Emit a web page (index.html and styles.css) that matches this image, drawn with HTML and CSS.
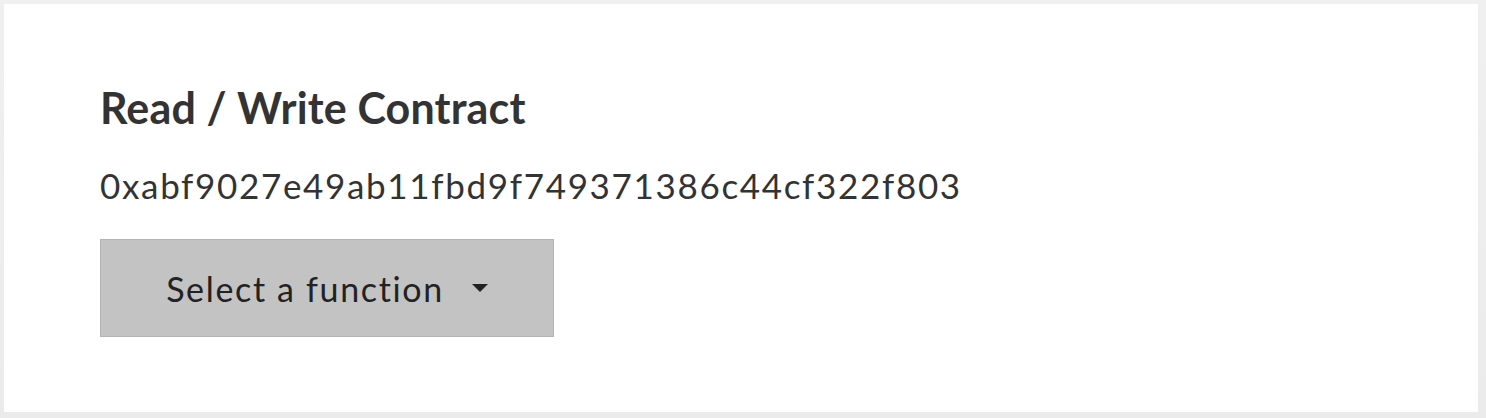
FILE: index.html
```html
<!DOCTYPE html>
<html>
<head>
<meta charset="utf-8">
<link rel="stylesheet" href="styles.css">
</head>
<body>
<div class="page">
  <div class="card">
    <h1 class="title">Read / Write Contract</h1>
    <div class="address">0xabf9027e49ab11fbd9f749371386c44cf322f803</div>
    <button class="select">
      <span class="select-label">Select a function</span>
      <svg class="caret" width="16" height="8" viewBox="0 0 16 8"><path d="M0 0H16L8 8Z" fill="#222"/></svg>
    </button>
  </div>
</div>
</body>
</html>
```
FILE: styles.css
```css
html, body {
  margin: 0;
  padding: 0;
}
body {
  background: #ededed;
  font-family: Lato, "Noto Sans", sans-serif;
}
.page {
  width: 1486px;
  height: 418px;
  box-sizing: border-box;
  padding: 4px 8px 6px 4px;
  background: linear-gradient(#f0f0f0, #ebebeb);
}
.card {
  background: #fff;
  height: 100%;
  box-sizing: border-box;
  padding: 79px 96px 0;
  display: flex;
  flex-direction: column;
  align-items: flex-start;
}
.title {
  margin: 0;
  font-size: 43px;
  font-weight: 700;
  color: #333;
  line-height: 50px;
  letter-spacing: 0.15px;
}
.address {
  margin-top: 30px;
  font-size: 35px;
  color: #333;
  line-height: 44px;
  letter-spacing: 1.67px;
}
.select {
  margin-top: 32px;
  width: 454px;
  height: 98px;
  box-sizing: border-box;
  background: #c3c3c3;
  border: 1px solid #b4b4b4;
  display: flex;
  align-items: center;
  justify-content: center;
  gap: 28px;
  padding: 0;
  font-family: Lato, "Noto Sans", sans-serif;
  font-size: 34px;
  color: #222;
  letter-spacing: 1.65px;
}
.caret {
  display: block;
}
```
